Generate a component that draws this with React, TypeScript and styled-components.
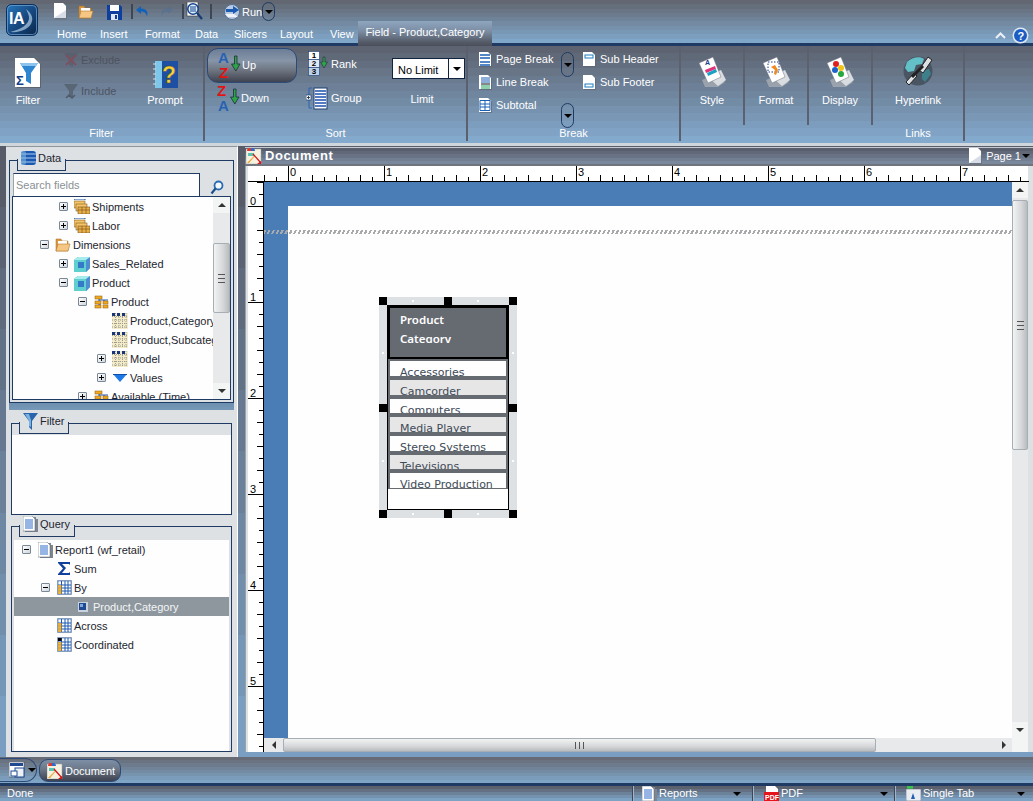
import React from "react";
import styled, { createGlobalStyle } from "styled-components";

// the original chrome is a banded GIF, so the gradients are hard stepped
const bands = (from: number[], to: number[], n: number) => {
  const stops: string[] = [];
  for (let i = 0; i < n; i++) {
    const t = i / (n - 1);
    const c = from.map((v, k) => Math.round(v + (to[k] - v) * t));
    stops.push(`rgb(${c.join(",")}) ${(i / n) * 100}% ${((i + 1) / n) * 100}%`);
  }
  return `linear-gradient(180deg, ${stops.join(", ")})`;
};

const CHROME_TOP = [98, 103, 113];
const CHROME_END = [128, 166, 201];
const NAVY = "#1f3a63";
const PANEL = "#dde1e4";

const Global = createGlobalStyle`
  html, body { margin: 0; padding: 0; background: #dde1e4; }
  body { font: 11px "Liberation Sans", Arial, sans-serif; color: #1d2530; }
  * { box-sizing: border-box; }
`;

const Page = styled.div`
  width: 1033px;
  height: 801px;
  overflow: hidden;
  display: flex;
  flex-direction: column;
`;

/* ---------- title bar ---------- */
const TitleBar = styled.div`
  height: 46px;
  flex: none;
  display: flex;
  background: ${bands(CHROME_TOP, CHROME_END, 10)};
  border-bottom: 3px solid ${NAVY};
`;
const LogoSlot = styled.div`
  width: 53px;
  padding: 4px 0 0 6px;
`;
const TitleMain = styled.div`
  flex: 1;
  display: flex;
  flex-direction: column;
`;
const QuickBar = styled.div`
  height: 23px;
  display: flex;
  align-items: center;
  padding-top: 2px;
`;
const QuickSlot = styled.div<{ $w: number; $pad?: number }>`
  width: ${({ $w }) => $w}px;
  padding-left: ${({ $pad }) => $pad ?? 0}px;
  flex: none;
  display: flex;
  align-items: center;
`;
const QuickSep = styled.div`
  width: 2px;
  height: 15px;
  background: #3e4654;
  flex: none;
`;
const RunLabel = styled.span`
  color: #fff;
  font-size: 11px;
  margin-left: 1px;
  width: 20px;
`;
const PillCaret = styled.div`
  width: 13px;
  height: 19px;
  border: 1px solid ${NAVY};
  border-radius: 7px;
  display: flex;
  align-items: center;
  justify-content: center;
  flex: none;
`;
const Caret = styled.i`
  display: block;
  width: 0;
  height: 0;
  flex: none;
  border-left: 4px solid transparent;
  border-right: 4px solid transparent;
  border-top: 4px solid #000;
`;
const TabRow = styled.div`
  flex: 1;
  display: flex;
  align-items: stretch;
  padding-left: 4px;
`;
const MenuTab = styled.div<{ $w: number }>`
  width: ${({ $w }) => $w}px;
  color: #fff;
  font-size: 11px;
  line-height: 26px;
`;
const ActiveTab = styled.div`
  width: 134px;
  margin-left: -1px;
  background: linear-gradient(180deg, #8ea6c0 0%, #7b8ca2 40%, #565c69 80%, #474b57 100%);
  color: #fff;
  font-size: 11px;
  line-height: 23px;
  text-align: center;
`;
const HelpBox = styled.div`
  margin-left: auto;
  display: flex;
  align-items: center;
  gap: 6px;
  padding: 2px 4px 0 0;
`;

/* ---------- ribbon ---------- */
const Ribbon = styled.div`
  height: 97px;
  flex: none;
  display: flex;
  background: ${bands([93, 99, 112], [131, 169, 205], 13)};
`;
const RibbonRule = styled.div`
  height: 3px;
  flex: none;
  background: #cfd6dc;
`;
const Group = styled.div<{ $w: number }>`
  width: ${({ $w }) => $w}px;
  flex: none;
  display: flex;
  flex-direction: column;
  border-right: 2px solid #5a606d;
  margin-bottom: 2px;
`;
const GroupBody = styled.div`
  height: 78px;
  flex: none;
  display: flex;
`;
const GroupLabel = styled.div`
  height: 17px;
  flex: none;
  color: #fff;
  text-align: center;
  font-size: 11px;
  line-height: 19px;
`;
const SmallCell = styled.div<{ $w: number }>`
  width: ${({ $w }) => $w}px;
  height: 79px;
  flex: none;
  border-right: 2px solid #5a606d;
`;
const LargeBtn = styled.div<{ $w: number }>`
  width: ${({ $w }) => $w}px;
  flex: none;
  display: flex;
  flex-direction: column;
  align-items: center;
  padding-top: 10px;
  color: #fff;
  font-size: 11px;
  gap: 6px;
`;
const IconBox = styled.div`
  height: 32px;
  display: flex;
  align-items: flex-end;
  justify-content: center;
`;
const Col = styled.div<{ $w: number; $top?: number; $gap?: number; $left?: number }>`
  width: ${({ $w }) => $w}px;
  flex: none;
  display: flex;
  flex-direction: column;
  padding-top: ${({ $top }) => $top ?? 0}px;
  padding-left: ${({ $left }) => $left ?? 0}px;
  gap: ${({ $gap }) => $gap ?? 0}px;
`;
const SmallBtn = styled.div<{ $h?: number; $off?: boolean; $gap?: number; $pad?: number }>`
  height: ${({ $h }) => $h ?? 20}px;
  display: flex;
  align-items: center;
  padding-left: ${({ $pad }) => $pad ?? 0}px;
  gap: ${({ $gap }) => $gap ?? 3}px;
  color: ${({ $off }) => ($off ? "#4d535f" : "#fff")};
  font-size: 11px;
  white-space: nowrap;
`;
const UpBtn = styled(SmallBtn)`
  width: 90px;
  height: 35px;
  margin-left: 2px;
  padding-left: 10px;
  padding-bottom: 2px;
  gap: 1px;
  border: 1px solid #2b4a78;
  border-radius: 11px;
  background: linear-gradient(180deg, #6b7d97 0%, #8695a7 35%, #6d7480 65%, #3f434f 100%);
`;
const DownBtn = styled(SmallBtn)`
  height: 26px;
  padding-left: 12px;
  gap: 1px;
`;
const LimitBox = styled.div`
  width: 73px;
  height: 21px;
  background: #fff;
  border: 1px solid #10233f;
  display: flex;
  color: #000;
  font-size: 11px;
  line-height: 22px;
  padding-left: 5px;
  justify-content: space-between;
`;
const LimitArrow = styled.div`
  width: 16px;
  border-left: 1px solid #10233f;
  display: flex;
  align-items: center;
  justify-content: center;
`;
const LimitLabel = styled.div`
  color: #fff;
  font-size: 11px;
  text-align: center;
  margin-top: 14px;
  padding-right: 13px;
`;
const BreakPill = styled(PillCaret)`
  height: 25px;
`;

/* ---------- workspace ---------- */
const Workspace = styled.div`
  height: 611px;
  flex: none;
  display: flex;
  padding: 0 0 0 6px;
  gap: 7px;
  background: ${bands([87, 92, 104], [121, 158, 193], 10)};
`;
const LeftPanel = styled.div`
  width: 232px;
  flex: none;
  background: ${PANEL};
  border-top: 1px solid #8f959b;
  border-right: 1px solid #fff;
  padding: 13px 3px 5px 3px;
  display: flex;
  flex-direction: column;
`;
const Frame = styled.div<{ $h: number; $inset?: number; $top?: number }>`
  height: ${({ $h }) => $h}px;
  flex: none;
  border: 1px solid ${NAVY};
  margin: ${({ $top }) => $top ?? 0}px ${({ $inset }) => $inset ?? 0}px 0;
  display: flex;
  flex-direction: column;
`;
// the tab only has its notch outline below the frame's top edge
const FrameTab = styled.div<{ $w: number; $lift?: number }>`
  width: ${({ $w }) => $w}px;
  height: 22px;
  flex: none;
  position: relative;
  margin: -12px 0 0 7px;
  background: ${PANEL};
  display: flex;
  align-items: center;
  gap: 2px;
  padding: 0 0 ${({ $lift }) => $lift ?? 4}px 4px;
  font-size: 11px;
  color: #1d2530;
  &::after {
    content: "";
    position: absolute;
    left: 0;
    right: 0;
    bottom: 0;
    height: 11px;
    border: 1px solid ${NAVY};
    border-top: 0;
  }
`;
const SearchRow = styled.div`
  flex: none;
  display: flex;
  height: 25px;
  padding: 2px 0 0 3px;
`;
const SearchField = styled.div`
  width: 187px;
  height: 23px;
  background: #fdfefd;
  border: 1px solid ${NAVY};
  border-left-color: #9aa3ab;
  border-bottom: 0;
  color: #8b9096;
  padding-left: 2px;
  font-size: 11px;
  line-height: 22px;
`;
const SearchIconSlot = styled.div`
  padding: 7px 0 0 10px;
`;
const TreeBox = styled.div`
  flex: 1;
  min-height: 0;
  margin: 0 2px 2px 2px;
  border: 1px solid ${NAVY};
  background: #fdfefd;
  display: flex;
  overflow: hidden;
`;
const TreeList = styled.div`
  flex: 1;
  min-width: 0;
  overflow: hidden;
`;
const TreeRow = styled.div<{ $level: number; $selected?: boolean }>`
  height: 19px;
  display: flex;
  align-items: center;
  white-space: nowrap;
  padding-left: ${({ $level }) => 8 + $level * 19}px;
  background: ${({ $selected }) => ($selected ? "#8e979e" : "transparent")};
  color: ${({ $selected }) => ($selected ? "#f3f5f6" : "#1d2530")};
  font-size: 11px;
`;
const ExpSlot = styled.div`
  width: 15px;
  flex: none;
`;
const Expander = styled.div<{ $open?: boolean }>`
  width: 9px;
  height: 9px;
  border: 1px solid #7a8794;
  border-radius: 1px;
  background: linear-gradient(135deg, #fff, #cfd6dd);
  position: relative;
  &::before {
    content: "";
    position: absolute;
    left: 1px;
    top: 3px;
    width: 5px;
    height: 1px;
    background: #000;
  }
  &::after {
    content: "";
    display: ${({ $open }) => ($open ? "none" : "block")};
    position: absolute;
    left: 3px;
    top: 1px;
    width: 1px;
    height: 5px;
    background: #000;
  }
`;
const NodeIcon = styled.div`
  width: 16px;
  height: 16px;
  flex: none;
  margin-right: 2px;
  display: flex;
  align-items: center;
  justify-content: center;
`;
const VScroll = styled.div<{ $w: number }>`
  width: ${({ $w }) => $w}px;
  flex: none;
  background: #e8e9ea;
  display: flex;
  flex-direction: column;
  align-items: stretch;
`;
const ScrollArrowV = styled.div<{ $up?: boolean }>`
  height: 16px;
  flex: none;
  display: flex;
  align-items: center;
  justify-content: center;
  background: #f3f4f4;
  &::before {
    content: "";
    width: 0;
    height: 0;
    border-left: 4px solid transparent;
    border-right: 4px solid transparent;
    ${({ $up }) => ($up ? "border-bottom: 4px solid #333;" : "border-top: 4px solid #333;")}
  }
`;
const ThumbV = styled.div<{ $top: number; $h: number }>`
  margin-top: ${({ $top }) => $top}px;
  height: ${({ $h }) => $h}px;
  flex: none;
  border: 1px solid #a7aeb4;
  border-radius: 2px;
  background: linear-gradient(90deg, #f2f3f3, #d5d7d9 60%, #b9bcbf);
  display: flex;
  align-items: center;
  justify-content: center;
  &::before {
    content: "";
    width: 7px;
    height: 7px;
    border-top: 1px solid #555;
    border-bottom: 1px solid #555;
    background: linear-gradient(#555, #555) center / 100% 1px no-repeat;
  }
`;
const ScrollFill = styled.div`
  flex: 1;
`;
const Splitter = styled.div`
  height: 7px;
  flex: none;
  background: linear-gradient(180deg, #6d8fb0, #7798b7);
`;
const FilterBody = styled.div`
  flex: 1;
  background: #fdfefd;
  margin-top: 1px;
`;
const QueryBody = styled.div`
  flex: 1;
  background: #fdfefd;
  margin: 3px 2px 0 2px;
`;

/* ---------- document ---------- */
const DocPanel = styled.div`
  flex: 1;
  min-width: 0;
  display: flex;
  flex-direction: column;
  padding: 0 0 5px 0;
`;
const DocHeader = styled.div`
  height: 19px;
  flex: none;
  margin-top: 1px;
  display: flex;
  align-items: center;
  padding: 0 3px 0 1px;
  background: ${bands([88, 94, 108], [122, 136, 158], 5)};
  border-top: 1px solid #c4cad0;
  border-bottom: 2px solid #70757d;
  color: #fff;
`;
const DocTitle = styled.span`
  font: 700 13px "Liberation Sans", sans-serif;
  margin: -2px 0 0 3px;
  letter-spacing: 0.6px;
`;
const PageBox = styled.div`
  margin-left: auto;
  display: flex;
  align-items: center;
  gap: 3px;
  font-size: 11px;
`;
const PageCaret = styled(Caret)`
  margin-left: -2px;
`;
const DocInner = styled.div`
  flex: 1;
  min-height: 0;
  background: ${PANEL};
  padding: 0 5px 0 2px;
  display: flex;
  flex-direction: column;
  border-left: 1px solid #9aa1a8;
`;
const RulerRow = styled.div`
  height: 16px;
  flex: none;
  background: #fff;
`;
const DocBody = styled.div`
  flex: 1;
  min-height: 0;
  display: flex;
`;
const RulerCol = styled.div`
  width: 16px;
  flex: none;
  background: #fff;
  overflow: hidden;
`;
const CanvasCol = styled.div`
  flex: 1;
  min-width: 0;
  display: flex;
  flex-direction: column;
`;
const CanvasRow = styled.div`
  flex: 1;
  min-height: 0;
  display: flex;
`;
const Canvas = styled.div`
  flex: 1;
  position: relative;
  overflow: hidden;
  background: #4a7db5;
  padding: 24px 0 0 24px;
`;
const Sheet = styled.div`
  height: 100%;
  background: #fdfefd;
`;
const MarginLine = styled.div`
  position: absolute;
  left: 0;
  right: 0;
  top: 48px;
  height: 4px;
  background: repeating-linear-gradient(115deg, #a9aaac 0 2px, transparent 2px 4px);
`;
const HScrollRow = styled.div`
  height: 14px;
  flex: none;
  display: flex;
  background: #e8e9ea;
`;
const ScrollArrowH = styled.div<{ $w: number; $left?: boolean }>`
  width: ${({ $w }) => $w}px;
  flex: none;
  display: flex;
  align-items: center;
  justify-content: center;
  &::before {
    content: "";
    width: 0;
    height: 0;
    border-top: 4px solid transparent;
    border-bottom: 4px solid transparent;
    ${({ $left }) => ($left ? "border-right: 4px solid #333;" : "border-left: 4px solid #333;")}
  }
`;
const ThumbH = styled.div`
  width: 593px;
  flex: none;
  border: 1px solid #a7aeb4;
  border-radius: 2px;
  background: linear-gradient(180deg, #f2f3f3, #d5d7d9 60%, #b9bcbf);
  display: flex;
  align-items: center;
  justify-content: center;
  &::before {
    content: "";
    width: 7px;
    height: 7px;
    border-left: 1px solid #555;
    border-right: 1px solid #555;
    background: linear-gradient(#555, #555) center / 1px 100% no-repeat;
  }
`;
const Corner = styled.div`
  width: 16px;
  flex: none;
  background: #f3f4f4;
`;

/* report object, placed freely on the canvas */
const ReportObject = styled.div`
  position: absolute;
  left: 115px;
  top: 115px;
  width: 138px;
  height: 221px;
  background: ${PANEL};
  padding: 8px;
`;
const Handle = styled.div<{ $x: number; $y: number }>`
  position: absolute;
  width: 8px;
  height: 8px;
  background: #000;
  left: ${({ $x }) => $x}px;
  top: ${({ $y }) => $y}px;
`;
const Dot = styled.div<{ $x: number; $y: number }>`
  position: absolute;
  width: 2px;
  height: 2px;
  background: #fff;
  left: ${({ $x }) => $x}px;
  top: ${({ $y }) => $y}px;
`;
const ObjectInner = styled.div`
  height: 100%;
  background: #fff;
  border: 1px solid #000;
`;
const ReportHead = styled.div`
  height: 53px;
  background: #666b72;
  border: 2px solid #000;
  color: #fff;
  padding: 2px 0 0 10px;
`;
const ReportHeadText = styled.div`
  height: 33px;
  overflow: hidden;
  font: 600 11.5px/19px "Noto Sans", sans-serif;
`;
const ReportRows = styled.div`
  background: #666b72;
  padding: 2px 2px 1px 2px;
  display: flex;
  flex-direction: column;
  gap: 4px;
`;
const ReportRow = styled.div<{ $alt: boolean; $h: number }>`
  height: ${({ $h }) => $h}px;
  background: ${({ $alt }) => ($alt ? "#e6e6e6" : "#fdfefd")};
  color: #3f4a58;
  font: 11px/23px "DejaVu Sans", sans-serif;
  padding-left: 10px;
  overflow: hidden;
  white-space: nowrap;
`;

/* ---------- bottom ---------- */
const TaskBar = styled.div`
  height: 29px;
  flex: none;
  display: flex;
  align-items: flex-start;
  gap: 2px;
  padding-top: 2px;
  background: ${bands([102, 107, 117], [126, 164, 198], 8)};
  border-bottom: 3px solid ${NAVY};
  background-clip: padding-box;
`;
const WinBtn = styled.div`
  width: 37px;
  height: 24px;
  margin-top: -1px;
  border: 1px solid #2b4a78;
  border-left: 0;
  border-radius: 0 12px 12px 0;
  display: flex;
  align-items: center;
  gap: 3px;
  padding-left: 9px;
`;
const DocTab = styled.div`
  width: 82px;
  height: 23px;
  border: 1px solid #2b4a78;
  border-radius: 9px;
  background: linear-gradient(180deg, #7e8fa5 0%, #6d7a8c 40%, #4e5462 80%, #3d4250 100%);
  color: #fff;
  display: flex;
  align-items: center;
  gap: 2px;
  padding-left: 7px;
`;
const StatusBar = styled.div`
  height: 15px;
  flex: none;
  display: flex;
  overflow: hidden;
  color: #fff;
  font-size: 11px;
  line-height: 15px;
  background: ${bands([92, 97, 110], [124, 162, 196], 5)};
`;
const StatusText = styled.div`
  width: 630px;
  padding-left: 7px;
  flex: none;
`;
const StatusCell = styled.div<{ $w: number; $pad: number; $right: number }>`
  width: ${({ $w }) => $w}px;
  flex: none;
  display: flex;
  align-items: center;
  gap: 2px;
  border-left: 1px solid #3f4756;
  box-shadow: inset 1px 0 0 #9db4cc;
  padding: 0 ${({ $right }) => $right}px 0 ${({ $pad }) => $pad}px;
  margin-left: 2px;
`;
const PushCaret = styled(Caret)`
  margin-left: auto;
`;

/* ---------- drawings ---------- */
const LogoIcon = () => (
  <svg width="32" height="33" viewBox="0 0 32 33">
    <defs>
      <linearGradient id="logoFill" x1="0" y1="0" x2="1" y2="1">
        <stop offset="0" stopColor="#2778bd" />
        <stop offset=".5" stopColor="#174a82" />
        <stop offset="1" stopColor="#0a2548" />
      </linearGradient>
    </defs>
    <rect x=".5" y=".5" width="31" height="31" rx="5" fill="url(#logoFill)" stroke="#0b2d5c" />
    <rect x="1.500" y="1.500" width="29" height="29" rx="4" fill="none" stroke="#74a8d6" strokeWidth=".7" />
    <path d="M4 28c10-2 20-8 19-15-.4-3-2-6-3-8 5 4 7 8 6 12-1 7-11 12-22 11z" fill="#a9c6e2" opacity=".75" />
    <text x="3" y="20" fontSize="16" fontWeight="700" fill="#fff" fontFamily="Liberation Sans" letterSpacing="-.5">IA</text>
  </svg>
);
const Sheetlet = ({ x = 1, y = 0, w = 12, h = 15 }: { x?: number; y?: number; w?: number; h?: number }) => (
  <>
    <path d={`M${x + 1} ${y + h + 1}h${w}v-${h - 3}l-3 -3h-${w - 3}z`} fill="#5a6472" opacity=".6" />
    <path d={`M${x} ${y}h${w - 3}l3 3v${h - 3}h-${w}z`} fill="#fff" />
  </>
);

const NewIcon = () => (
  <svg width="15" height="17" viewBox="0 0 15 17">
    <path d="M2 16.500h12V4l-3-3H2z" fill="#6a7380" />
    <path d="M1 0h9l3 3v12H1z" fill="#fff" />
    <path d="M1 15 13 7v8z" fill="#d7dde6" />
  </svg>
);
const FolderIcon = () => (
  <svg width="16" height="16" viewBox="0 0 16 16">
    <path d="M1 2h5l1 2h6v10H1z" fill="#d9973f" stroke="#a8702a" strokeWidth=".5" />
    <path d="M3 4h9v6H3z" fill="#fff" />
    <path d="M1 14 3 7h12l-2 7z" fill="#f6c684" stroke="#b5792a" strokeWidth=".6" />
  </svg>
);
const SaveIcon = () => (
  <svg width="15" height="16" viewBox="0 0 15 16">
    <path d="M0 1h13l2 2v13H0z" fill="#0f3f9e" />
    <rect x="3" y="1" width="9" height="6" fill="#fff" />
    <rect x="4" y="10" width="7" height="6" fill="#dfe6f2" />
    <rect x="8" y="11" width="2" height="4" fill="#0f3f9e" />
  </svg>
);
const UndoIcon = ({ off }: { off?: boolean }) => (
  <svg width="13" height="12" viewBox="0 0 13 12" style={off ? { transform: "scaleX(-1)", opacity: 0.45 } : undefined}>
    <path d="M5 0 0 4l5 4V5.500c3 0 5 1 6 5 1.500-4 0-8-6-8z" fill={off ? "#4b6f9c" : "#1261b8"} />
  </svg>
);
const PreviewIcon = () => (
  <svg width="17" height="19" viewBox="0 0 17 19">
    <path d="M1 0h11v14H1z" fill="#fff" stroke="#333" strokeWidth=".6" />
    <circle cx="7" cy="7" r="5.200" fill="#dff0fb" stroke="#12408c" strokeWidth="1.500" />
    <path d="M4 5h6M4 7h6M4 9h6" stroke="#12408c" />
    <path d="m11 11 5 6" stroke="#173a72" strokeWidth="2.200" />
  </svg>
);
const RunIcon = () => (
  <svg width="17" height="16" viewBox="0 0 17 16">
    <circle cx="8" cy="8" r="7.500" fill="#b9cbe2" stroke="#566f92" />
    <path d="M2 5h7V2l6 4-6 4V8H2z" fill="#1b5bb0" />
    <path d="M1 10h9l4 3H4z" fill="#f0f3f7" />
  </svg>
);
const FilterBig = () => (
  <svg width="26" height="30" viewBox="0 0 26 30">
    <path d="M2 30h24V6l-5-5H2z" fill="#5c6470" />
    <path d="M0 0h19l6 6v23H0z" fill="#fff" />
    <path d="M5 5h18l-7 10v11l-5-3v-8z" fill="#2e86d0" />
    <path d="M5 5h18l-2 3H7z" fill="#8cc4ee" />
    <text x="1" y="27" fontSize="13" fontWeight="700" fill="#113f88" fontFamily="Liberation Sans">Σ</text>
  </svg>
);
const GreyFunnel = ({ cross }: { cross?: boolean }) => (
  <svg width="16" height="16" viewBox="0 0 16 16">
    <path d="M1 1h14L10 8v7l-4-2V8z" fill="#55616f" opacity=".85" />
    {cross && <path d="m3 3 10 10M13 3 3 13" stroke="#7d5060" strokeWidth="2" />}
    {!cross && <path d="m3 15 3-3 3 3 3-3" stroke="#4f5b68" strokeWidth="1.500" fill="none" />}
  </svg>
);
const PromptBig = () => (
  <svg width="25" height="28" viewBox="0 0 25 28">
    <path d="M2 1h23v27H2z" fill="#1d4fa3" />
    <path d="M2 1h7v27H2z" fill="#7ec7ea" />
    <path d="M0 4h3M0 9h3M0 14h3M0 19h3M0 24h3" stroke="#d8dde3" />
    <text x="9" y="23" fontSize="23" fontWeight="700" fill="#f4d13d" stroke="#5c4a0c" strokeWidth=".4" fontFamily="Liberation Sans">?</text>
  </svg>
);
const SortIcon = ({ down }: { down?: boolean }) => (
  <svg width="23" height="28" viewBox="0 0 23 28">
    <text x="0" y="12" fontSize="15" fontWeight="700" fill={down ? "#e01414" : "#2a62b3"} fontFamily="Liberation Sans">{down ? "Z" : "A"}</text>
    <text x="1" y="27" fontSize="15" fontWeight="700" fill={down ? "#2a62b3" : "#e01414"} fontFamily="Liberation Sans">{down ? "A" : "Z"}</text>
    <path d="M16.500 5h2.500v8h3l-4.200 7-4.300-7h3z" fill="#2fa24a" stroke="#123" strokeWidth=".7" />
  </svg>
);
const RankIcon = () => (
  <svg width="20" height="25" viewBox="0 0 20 25" fontFamily="Liberation Sans" fontSize="8" fontWeight="700">
    <rect x=".5" y=".5" width="11" height="8" fill="#fff" stroke="#1d3f72" strokeWidth=".6" />
    <rect x=".5" y="8.500" width="11" height="8" fill="#dfe8f4" stroke="#1d3f72" strokeWidth=".6" />
    <rect x=".5" y="16.500" width="11" height="8" fill="#bcd0e8" stroke="#1d3f72" strokeWidth=".6" />
    <text x="3.800" y="7.300">1</text>
    <text x="3.800" y="15.300">2</text>
    <text x="3.800" y="23.300">3</text>
    <path d="M15 6h2v5h2.500l-3.500 6-3.500-6H15z" fill="#2fa24a" stroke="#123" strokeWidth=".5" />
  </svg>
);
const GroupIcon = () => (
  <svg width="22" height="23" viewBox="0 0 22 23">
    <path d="M6 1H3v20h3" fill="none" stroke="#2a62b3" />
    <rect x="0" y="8" width="5" height="5" fill="#fff" stroke="#1d3f72" strokeWidth=".7" />
    <path d="M1 10.500h3M2.500 9v3" stroke="#123" strokeWidth=".8" />
    <rect x="8" y="1" width="13" height="21" fill="#fff" stroke="#1d3f72" />
    <path d="M9 4h11M9 7h11M9 10h11M9 13h11M9 16h11M9 19h11" stroke="#1c50ad" strokeWidth="1.500" />
  </svg>
);
const DocLines = ({ kind }: { kind: "page" | "line" | "sub" | "head" | "foot" }) => (
  <svg width="13" height="15" viewBox="0 0 13 15">
    <Sheetlet x={0} y={0} w={12} h={14} />
    {kind === "page" && <path d="M1 3h10M1 6h10" stroke="#1a5fb4" strokeWidth="1.500" />}
    {kind === "page" && <path d="M1 10h10M1 13h10" stroke="#1a5fb4" strokeWidth="1.500" />}
    {kind === "line" && <path d="M2 3h9M2 5h9M2 7h9" stroke="#1a5fb4" />}
    {kind === "line" && <path d="M2 9h9" stroke="#111" />}
    {kind === "line" && <path d="M2 11h9M2 13h9" stroke="#1fa05a" />}
    {kind === "sub" && <path d="M1 2.500h10v10H1zM6 2.500v10M1 6h10M1 9h10" fill="none" stroke="#1a5fb4" />}
    {kind === "head" && <rect x="2" y="3" width="8" height="3" fill="#fff" stroke="#1a7fc4" />}
    {kind === "foot" && <rect x="2" y="9" width="8" height="3" fill="#fff" stroke="#1a7fc4" />}
  </svg>
);
const SheetsIcon = ({ tone }: { tone: "style" | "format" | "display" }) => (
  <svg width="31" height="32" viewBox="0 0 31 32">
    <path d="M5 24 18 18l10 8-7 5H8z" fill="#9aa3ad" />
    <path d="M10 20 24 14l5 10-8 6z" fill="#d9dde1" />
    <path d="m2 7 14-6 8 20-13 6z" fill="#fff" stroke="#6a7380" strokeWidth=".5" />
    {tone === "style" && <path d="m8 14 10-4 1 3-10 4z" fill="#e0337a" />}
    {tone === "style" && <path d="m10 17 9-4 1 3-9 4z" fill="#1c9fc4" />}
    {tone === "style" && <text x="8" y="9" fontSize="7" fontWeight="700" fill="#1c3f88" fontFamily="Liberation Sans">A</text>}
    {tone === "format" && <path d="M7 6h11v10H7z" fill="none" stroke="#1c3f88" strokeDasharray="1.500 1.500" />}
    {tone === "format" && <path d="m10 11 4-2 3 5-2 5-2-1 1-4z" fill="#ef8a1f" />}
    {tone === "display" && <circle cx="11" cy="8" r="3" fill="#e01f1f" />}
    {tone === "display" && <circle cx="16" cy="12" r="3" fill="#f0c419" />}
    {tone === "display" && <circle cx="10" cy="14" r="3" fill="#1c62c9" />}
    {tone === "display" && <circle cx="16" cy="18" r="3" fill="#26a83f" />}
  </svg>
);
const HyperlinkIcon = () => (
  <svg width="33" height="34" viewBox="0 0 33 34">
    <circle cx="16" cy="17" r="14.500" fill="#4a5563" />
    <path d="M5 8c5-5 13-6 17-3l-2 5-6 1-2 6-6 1-3-4z" fill="#63c0c8" />
    <path d="m20 17 7-2 2 5-6 8-3-3z" fill="#3e7f8c" />
    <path d="M4 28 12 19l3 3-8 9zM17 16 26 3l4 3-9 13z" fill="#dde1e4" stroke="#222" />
    <path d="m10 23 11-11" stroke="#222" strokeWidth="3" />
  </svg>
);
const DocChart = () => (
  <svg width="16" height="16" viewBox="0 0 16 16">
    <path d="M0 1h15v15H0z" fill="#f6f2df" stroke="#9aa3ad" strokeWidth=".5" />
    <path d="M1 3a3.500 3.500 0 0 1 7 0z" fill="#e2382c" />
    <path d="M5 0a3 3 0 0 1 4 3H5z" fill="#2e6bc9" />
    <path d="M2 5h6v3H2z" fill="#5cc6b5" />
    <path d="M1 15 8 8h1L3 15z" fill="#eca23a" />
    <path d="m7 6 8 9" stroke="#d7141a" strokeWidth="1.300" />
    <path d="M15 16h-4l4-3z" fill="#d7141a" />
  </svg>
);
const MagnifierIcon = () => (
  <svg width="14" height="15" viewBox="0 0 14 15">
    <circle cx="8.500" cy="5.500" r="4" fill="#f4f8fb" stroke="#2a6bb0" strokeWidth="1.800" />
    <path d="m5.500 8.500-4 5" stroke="#1c4f8c" strokeWidth="2.200" />
  </svg>
);
const DbIcon = () => (
  <svg width="15" height="16" viewBox="0 0 15 16">
    <rect x="0" y="1" width="15" height="14" rx="3" fill="#1c58b0" />
    <path d="M0 4h15M0 8h15M0 12h15" stroke="#a9d0ee" />
    <rect x="0" y="1" width="5" height="14" rx="2" fill="#79b5e3" opacity=".6" />
  </svg>
);
const FunnelIcon = () => (
  <svg width="15" height="17" viewBox="0 0 15 17">
    <path d="M0 0h15L9 8v9l-3-3V8z" fill="#2a64ad" />
    <path d="M2 1h4l2 6v7l-2-1V8z" fill="#7ab3de" />
  </svg>
);
const ReportDoc = () => (
  <svg width="15" height="16" viewBox="0 0 15 16">
    <path d="M2 16h13V3h-2V1H2z" fill="#7e8791" />
    <path d="M0 0h9l3 3v12H0z" fill="#fff" stroke="#56606d" strokeWidth=".5" />
    <path d="M2 4h8M2 6h8M2 8h8M2 10h8M2 12h8" stroke="#2e6bc9" />
  </svg>
);
const MeasureStack = () => (
  <svg width="16" height="15" viewBox="0 0 16 15">
    <path d="M0 1V0h11v1" fill="none" stroke="#1a4f9c" />
    <rect x="0" y="2" width="11" height="7" fill="#f5c469" stroke="#6e4a12" strokeWidth=".5" />
    <rect x="2" y="5" width="11" height="7" fill="#f5c469" stroke="#6e4a12" strokeWidth=".5" />
    <rect x="4" y="8" width="12" height="7" fill="#e9ae4a" stroke="#5c3d0e" strokeWidth=".5" />
    <path d="M4 11h12M8 8v7M12 8v7" stroke="#5c3d0e" strokeWidth=".5" />
  </svg>
);
const CubeIcon = () => (
  <svg width="16" height="16" viewBox="0 0 16 16">
    <path d="M0 4 4 1h12v11l-4 4H0z" fill="#2ba5b8" />
    <path d="M0 4h12v12H0z" fill="#5fd0cf" />
    <path d="M12 4l4-3v11l-4 4z" fill="#4e8dd1" />
    <path d="M0 4 4 1h12l-4 3z" fill="#a6ecec" />
    <rect x="4" y="6" width="6" height="6" fill="#3579c9" />
  </svg>
);
const HierIcon = () => (
  <svg width="15" height="14" viewBox="0 0 15 14">
    <path d="M5 3v7h2M5 5h9M10 5v3" fill="none" stroke="#1c58b0" />
    <rect x="1" y="1" width="7" height="3" fill="#f2a922" stroke="#8a5a0b" strokeWidth=".5" />
    <rect x="1" y="6" width="6" height="3" fill="#f2a922" stroke="#8a5a0b" strokeWidth=".5" />
    <rect x="9" y="6" width="5" height="3" fill="#f2a922" stroke="#8a5a0b" strokeWidth=".5" />
    <rect x="1" y="10" width="6" height="3" fill="#f2a922" stroke="#8a5a0b" strokeWidth=".5" />
    <rect x="9" y="10" width="5" height="3" fill="#f2a922" stroke="#8a5a0b" strokeWidth=".5" />
  </svg>
);
const FieldGrid = () => (
  <svg width="16" height="16" viewBox="0 0 16 16">
    <rect width="16" height="16" fill="#f4ecc9" />
    <path d="M3.500 0v16M7 0v16M10.500 0v16M14 0v16M0 3.500h16M0 7h16M0 10.500h16M0 14h16" stroke="#9b9b90" strokeDasharray="1 1" />
    <path d="M0 0h3v3H0zM5 0h3v3H5zM10 0h3v3h-3z" fill="#17357a" />
  </svg>
);
const ValueTri = () => (
  <svg width="16" height="10" viewBox="0 0 16 10">
    <path d="M1 1h14L8 9z" fill="#1e7ae6" />
    <path d="M1 1h14v1H1z" fill="#0f4fa8" />
  </svg>
);
const SigmaIcon = () => (
  <svg width="13" height="13" viewBox="0 0 13 13">
    <path d="M0 0h12v3l-1-1H4l4 4-4 5h7l1-1v3H0v-1l5-5.500L0 1z" fill="#113f9c" />
  </svg>
);
const TableIcon = ({ corner }: { corner?: boolean }) => (
  <svg width="15" height="15" viewBox="0 0 15 15">
    <rect width="15" height="15" fill="#b3bac2" />
    <rect x="1" y="1" width="13" height="13" fill="#fff" stroke="#1c58b0" strokeWidth=".6" />
    <path d="M1 5h13M1 8h13M1 11h13M4.500 1v13M8 1v13M11 1v13" stroke="#1c58b0" />
    <path d="M1 1v13h3.500V5H1z" fill="#f0a81e" opacity=".85" />
    {corner && <rect x="1" y="1" width="3.500" height="3" fill="#000" />}
  </svg>
);
const FieldDot = () => (
  <svg width="10" height="10" viewBox="0 0 10 10">
    <rect width="10" height="10" fill="#c9d3df" />
    <rect x="1" y="1" width="7" height="7" fill="#1f4a92" />
    <rect x="2" y="2" width="3" height="3" fill="#7da6dc" />
  </svg>
);
const WindowsIcon = () => (
  <svg width="16" height="16" viewBox="0 0 16 16">
    <rect x="0" y="0" width="15" height="15" fill="#fff" stroke="#3d4a5c" strokeWidth=".6" />
    <rect x="1" y="1" width="13" height="3" fill="#1f4a92" />
    <rect x="6" y="6" width="9" height="9" fill="#eef2f6" stroke="#1f4a92" />
    <rect x="2" y="9" width="6" height="5" fill="#fff" stroke="#1f4a92" />
  </svg>
);
const PdfIcon = () => (
  <svg width="15" height="15" viewBox="0 0 15 15">
    <path d="M2 0h9l3 3v4H2z" fill="#fff" />
    <rect x="0" y="6" width="15" height="9" fill="#e3141b" />
    <text x="1" y="14" fontSize="7" fontWeight="700" fill="#fff" fontFamily="Liberation Sans">PDF</text>
  </svg>
);
const TabIcon = () => (
  <svg width="15" height="15" viewBox="0 0 15 15">
    <rect x="1" y="0" width="6" height="3" fill="#39c24e" />
    <rect x="0" y="3" width="15" height="12" fill="#e9edf2" stroke="#556" strokeWidth=".5" />
    <path d="M5 13l2-6 2 6z" fill="#1f5fb3" />
  </svg>
);
const HelpIcon = () => (
  <svg width="17" height="17" viewBox="0 0 17 17">
    <circle cx="8.500" cy="8.500" r="8" fill="#dfe7f2" />
    <circle cx="8.500" cy="8.500" r="6.500" fill="#1b5dc2" />
    <text x="5.500" y="13" fontSize="11" fontWeight="700" fill="#fff" fontFamily="Liberation Sans">?</text>
  </svg>
);
const Chevron = () => (
  <svg width="11" height="7" viewBox="0 0 11 7">
    <path d="m1 6 4.500-4.500L10 6" fill="none" stroke="#eef2f6" strokeWidth="2" />
  </svg>
);

const RulerTop = () => {
  const width = 781;
  const ticks: React.ReactNode[] = [];
  for (let x = 16; x < width; x += 12) {
    const major = (x - 40) % 96 === 0;
    const mid = (x - 40) % 24 === 0;
    ticks.push(<path key={x} d={`M${x + 0.5} ${major ? 0 : mid ? 9 : 11}V15`} stroke="#000" />);
  }
  return (
    <svg width={width} height={16} style={{ display: "block" }}>
      {ticks}
      {[0, 1, 2, 3, 4, 5, 6, 7].map((n) => (
        <text key={n} x={42 + n * 96} y={10} fontSize="11" fontFamily="Liberation Sans">{n}</text>
      ))}
      <path d="M0 15.500H781" stroke="#000" />
    </svg>
  );
};

const RulerLeft = () => {
  const height = 570;
  const ticks: React.ReactNode[] = [];
  for (let y = 0; y < height; y += 12) {
    const major = (y - 24 + 960) % 96 === 0;
    const mid = (y - 24 + 960) % 24 === 0;
    ticks.push(<path key={y} d={`M${major ? 0 : mid ? 9 : 11} ${y + 0.5}H16`} stroke="#000" />);
  }
  return (
    <svg width={16} height={height} style={{ display: "block" }}>
      {ticks}
      {[0, 1, 2, 3, 4, 5].map((n) => (
        <text key={n} x={2} y={23 + n * 96} fontSize="11" fontFamily="Liberation Sans">{n}</text>
      ))}
      <path d="M15.500 0V570" stroke="#000" />
    </svg>
  );
};

type Node = {
  level: number;
  label: string;
  icon: React.ReactNode;
  exp?: "open" | "closed";
  selected?: boolean;
};

const dataTree: Node[] = [
  { level: 2, label: "Shipments", icon: <MeasureStack />, exp: "closed" },
  { level: 2, label: "Labor", icon: <MeasureStack />, exp: "closed" },
  { level: 1, label: "Dimensions", icon: <FolderIcon />, exp: "open" },
  { level: 2, label: "Sales_Related", icon: <CubeIcon />, exp: "closed" },
  { level: 2, label: "Product", icon: <CubeIcon />, exp: "open" },
  { level: 3, label: "Product", icon: <HierIcon />, exp: "open" },
  { level: 4, label: "Product,Category", icon: <FieldGrid /> },
  { level: 4, label: "Product,Subcategory", icon: <FieldGrid /> },
  { level: 4, label: "Model", icon: <FieldGrid />, exp: "closed" },
  { level: 4, label: "Values", icon: <ValueTri />, exp: "closed" },
  { level: 3, label: "Available (Time)", icon: <HierIcon />, exp: "closed" },
];

const queryTree: Node[] = [
  { level: 0, label: "Report1 (wf_retail)", icon: <ReportDoc />, exp: "open" },
  { level: 1, label: "Sum", icon: <SigmaIcon /> },
  { level: 1, label: "By", icon: <TableIcon />, exp: "open" },
  { level: 2, label: "Product,Category", icon: <FieldDot />, selected: true },
  { level: 1, label: "Across", icon: <TableIcon /> },
  { level: 1, label: "Coordinated", icon: <TableIcon corner /> },
];

const categories = [
  { name: "Accessories", h: 15 },
  { name: "Camcorder", h: 15 },
  { name: "Computers", h: 14 },
  { name: "Media Player", h: 15 },
  { name: "Stereo Systems", h: 15 },
  { name: "Televisions", h: 14 },
  { name: "Video Production", h: 15 },
];

const handles = [
  [0, 0], [65, 0], [130, 0],
  [0, 107], [130, 107],
  [0, 213], [65, 213], [130, 213],
];
const dots = [
  [33, 3], [98, 3], [33, 216], [98, 216], [3, 55], [133, 55], [3, 163], [133, 163],
];

const TreeRows = ({ nodes }: { nodes: Node[] }) => (
  <>
    {nodes.map((n, i) => (
      <TreeRow key={i} $level={n.level} $selected={n.selected}>
        <ExpSlot>{n.exp && <Expander $open={n.exp === "open"} />}</ExpSlot>
        <NodeIcon>{n.icon}</NodeIcon>
        {n.label}
      </TreeRow>
    ))}
  </>
);

export default function App() {
  return (
    <Page>
      <Global />
      <TitleBar>
        <LogoSlot>
          <LogoIcon />
        </LogoSlot>
        <TitleMain>
          <QuickBar>
            <QuickSlot $w={25}><NewIcon /></QuickSlot>
            <QuickSlot $w={29}><FolderIcon /></QuickSlot>
            <QuickSlot $w={24}><SaveIcon /></QuickSlot>
            <QuickSep />
            <QuickSlot $w={27} $pad={3}><UndoIcon /></QuickSlot>
            <QuickSlot $w={22}><UndoIcon off /></QuickSlot>
            <QuickSep />
            <QuickSlot $w={26} $pad={2}><PreviewIcon /></QuickSlot>
            <QuickSep />
            <QuickSlot $w={12} />
            <RunIcon />
            <RunLabel>Run</RunLabel>
            <PillCaret><Caret /></PillCaret>
          </QuickBar>
          <TabRow>
            <MenuTab $w={43}>Home</MenuTab>
            <MenuTab $w={45}>Insert</MenuTab>
            <MenuTab $w={50}>Format</MenuTab>
            <MenuTab $w={39}>Data</MenuTab>
            <MenuTab $w={46}>Slicers</MenuTab>
            <MenuTab $w={50}>Layout</MenuTab>
            <MenuTab $w={29}>View</MenuTab>
            <ActiveTab>Field - Product,Category</ActiveTab>
            <HelpBox>
              <Chevron />
              <HelpIcon />
            </HelpBox>
          </TabRow>
        </TitleMain>
      </TitleBar>

      <Ribbon>
        <Group $w={205}>
          <GroupBody>
            <LargeBtn $w={56}>
              <IconBox><FilterBig /></IconBox>
              Filter
            </LargeBtn>
            <Col $w={91} $top={4} $gap={11} $left={7}>
              <SmallBtn $off $gap={2}><GreyFunnel cross />Exclude</SmallBtn>
              <SmallBtn $off $gap={2}><GreyFunnel />Include</SmallBtn>
            </Col>
            <LargeBtn $w={36}>
              <IconBox><PromptBig /></IconBox>
              Prompt
            </LargeBtn>
          </GroupBody>
          <GroupLabel>Filter</GroupLabel>
        </Group>
        <Group $w={263}>
          <GroupBody>
            <Col $w={101} $top={2} $gap={2}>
              <UpBtn><SortIcon />Up</UpBtn>
              <DownBtn><SortIcon down />Down</DownBtn>
            </Col>
            <Col $w={86} $top={5} $gap={10}>
              <SmallBtn $h={25} $pad={2}><RankIcon />Rank</SmallBtn>
              <SmallBtn $h={24}><GroupIcon />Group</SmallBtn>
            </Col>
            <Col $w={73} $top={12}>
              <LimitBox>No Limit<LimitArrow><Caret /></LimitArrow></LimitBox>
              <LimitLabel>Limit</LimitLabel>
            </Col>
          </GroupBody>
          <GroupLabel>Sort</GroupLabel>
        </Group>
        <Group $w={213}>
          <GroupBody>
            <Col $w={93} $top={3} $gap={3} $left={11}>
              <SmallBtn $gap={4}><DocLines kind="page" />Page Break</SmallBtn>
              <SmallBtn $gap={4}><DocLines kind="line" />Line Break</SmallBtn>
              <SmallBtn $gap={4}><DocLines kind="sub" />Subtotal</SmallBtn>
            </Col>
            <Col $w={22} $top={6} $gap={26}>
              <BreakPill><Caret /></BreakPill>
              <BreakPill><Caret /></BreakPill>
            </Col>
            <Col $w={90} $top={3} $gap={3}>
              <SmallBtn $gap={4}><DocLines kind="head" />Sub Header</SmallBtn>
              <SmallBtn $gap={4}><DocLines kind="foot" />Sub Footer</SmallBtn>
            </Col>
          </GroupBody>
          <GroupLabel>Break</GroupLabel>
        </Group>
        <SmallCell $w={64}><LargeBtn $w={62}><IconBox><SheetsIcon tone="style" /></IconBox>Style</LargeBtn></SmallCell>
        <SmallCell $w={64}><LargeBtn $w={62}><IconBox><SheetsIcon tone="format" /></IconBox>Format</LargeBtn></SmallCell>
        <SmallCell $w={64}><LargeBtn $w={62}><IconBox><SheetsIcon tone="display" /></IconBox>Display</LargeBtn></SmallCell>
        <Group $w={92}>
          <GroupBody>
            <LargeBtn $w={90}><IconBox><HyperlinkIcon /></IconBox>Hyperlink</LargeBtn>
          </GroupBody>
          <GroupLabel>Links</GroupLabel>
        </Group>
      </Ribbon>
      <RibbonRule />

      <Workspace>
        <LeftPanel>
          <Frame $h={243}>
            <FrameTab $w={49} $lift={5}><DbIcon />Data</FrameTab>
            <SearchRow>
              <SearchField>Search fields</SearchField>
              <SearchIconSlot><MagnifierIcon /></SearchIconSlot>
            </SearchRow>
            <TreeBox>
              <TreeList><TreeRows nodes={dataTree} /></TreeList>
              <VScroll $w={17}>
                <ScrollArrowV $up />
                <ThumbV $top={30} $h={70} />
                <ScrollFill />
                <ScrollArrowV />
              </VScroll>
            </TreeBox>
          </Frame>
          <Splitter />
          <Frame $h={92} $inset={2} $top={13}>
            <FrameTab $w={50}><FunnelIcon />Filter</FrameTab>
            <FilterBody />
          </Frame>
          <Frame $h={226} $inset={2} $top={11}>
            <FrameTab $w={56}><ReportDoc />Query</FrameTab>
            <QueryBody>
              <TreeRows nodes={queryTree} />
            </QueryBody>
          </Frame>
        </LeftPanel>
        <DocPanel>
          <DocHeader>
            <DocChart />
            <DocTitle>Document</DocTitle>
            <PageBox>
              <NewIcon />
              Page 1
              <PageCaret />
            </PageBox>
          </DocHeader>
          <DocInner>
            <RulerRow><RulerTop /></RulerRow>
            <DocBody>
              <RulerCol><RulerLeft /></RulerCol>
              <CanvasCol>
                <CanvasRow>
                  <Canvas>
                    <Sheet />
                    <MarginLine />
                    <ReportObject>
                      <ObjectInner>
                        <ReportHead>
                          <ReportHeadText>Product<br />Category</ReportHeadText>
                        </ReportHead>
                        <ReportRows>
                          {categories.map((c, i) => (
                            <ReportRow key={c.name} $alt={i % 2 === 1} $h={c.h}>{c.name}</ReportRow>
                          ))}
                        </ReportRows>
                      </ObjectInner>
                      {handles.map(([x, y]) => <Handle key={`${x}-${y}`} $x={x} $y={y} />)}
                      {dots.map(([x, y]) => <Dot key={`${x}-${y}`} $x={x} $y={y} />)}
                    </ReportObject>
                  </Canvas>
                  <VScroll $w={16}>
                    <ScrollArrowV $up />
                    <ThumbV $top={2} $h={250} />
                    <ScrollFill />
                    <ScrollArrowV />
                  </VScroll>
                </CanvasRow>
                <HScrollRow>
                  <ScrollArrowH $w={19} $left />
                  <ThumbH />
                  <ScrollFill />
                  <ScrollArrowH $w={16} />
                  <Corner />
                </HScrollRow>
              </CanvasCol>
            </DocBody>
          </DocInner>
        </DocPanel>
      </Workspace>

      <TaskBar>
        <WinBtn><WindowsIcon /><Caret /></WinBtn>
        <DocTab><DocChart />Document</DocTab>
      </TaskBar>
      <StatusBar>
        <StatusText>Done</StatusText>
        <StatusCell $w={118} $pad={9} $right={9}><ReportDoc />Reports<PushCaret /></StatusCell>
        <StatusCell $w={140} $pad={11} $right={4}><PdfIcon />PDF<PushCaret /></StatusCell>
        <StatusCell $w={139} $pad={11} $right={8}><TabIcon />Single Tab<PushCaret /></StatusCell>
      </StatusBar>
    </Page>
  );
}
